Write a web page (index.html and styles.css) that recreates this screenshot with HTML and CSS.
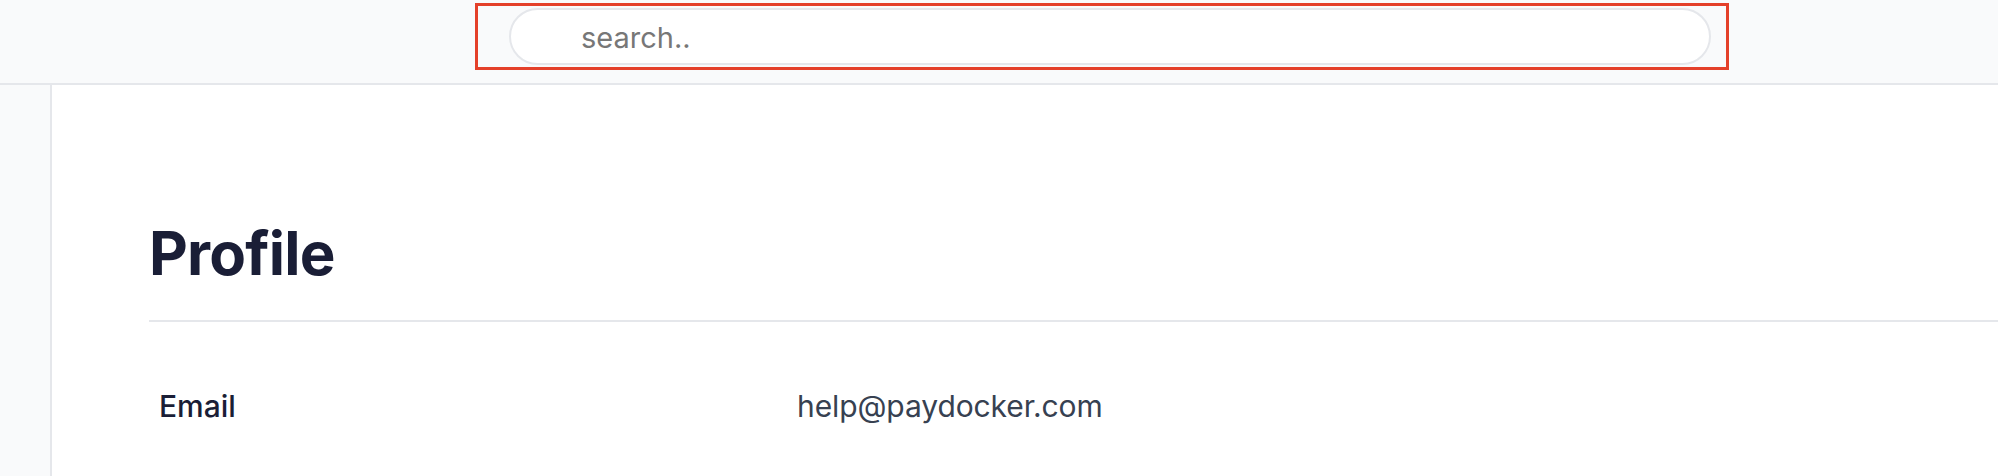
FILE: index.html
```html
<!DOCTYPE html>
<html>
<head>
<meta charset="utf-8">
<link rel="stylesheet" href="styles.css">
</head>
<body>
<header class="topbar">
  <div class="search-frame">
    <input class="search-input" type="text" placeholder="search..">
  </div>
</header>
<div class="layout">
  <aside class="sidebar"></aside>
  <main class="content">
    <h1 class="title">Profile</h1>
    <div class="divider"></div>
    <dl class="fields">
      <dt class="label">Email</dt>
      <dd class="value">help@paydocker.com</dd>
    </dl>
  </main>
</div>
</body>
</html>
```
FILE: styles.css
```css
html, body {
  margin: 0;
  padding: 0;
  height: 100%;
  overflow: hidden;
}
body {
  font-family: Inter, "Liberation Sans", sans-serif;
  background: #ffffff;
  color: #1a1e36;
}
.topbar {
  height: 83px;
  background: #f9fafb;
  border-bottom: 2px solid #e5e7eb;
  box-sizing: content-box;
  display: flex;
  align-items: flex-start;
  padding-left: 475px;
}
.search-frame {
  margin-top: 3px;
  width: 1254px;
  height: 67px;
  box-sizing: border-box;
  border: 3px solid #e4402a;
  padding: 2px 15px 0 31px;
}
.search-input {
  display: block;
  width: 100%;
  height: 57px;
  box-sizing: border-box;
  border: 2px solid #e5e7eb;
  border-radius: 29px;
  background: #ffffff;
  padding: 2px 0 0 70px;
  font-family: Inter, "Liberation Sans", sans-serif;
  font-size: 29px;
  font-weight: 400;
  color: #374151;
  outline: none;
}
.search-input::placeholder {
  color: #777777;
}
.layout {
  display: flex;
  height: calc(100% - 85px);
}
.sidebar {
  width: 50px;
  flex: none;
  background: #f9fafb;
  border-right: 2px solid #e5e7eb;
}
.content {
  flex: 1;
  padding: 138px 0 0 97px;
}
.title {
  margin: 0;
  font-size: 60px;
  line-height: 60px;
  font-weight: 700;
  color: #1a1e36;
  letter-spacing: -0.8px;
}
.divider {
  margin-top: 37px;
  height: 2px;
  background: #e5e7eb;
}
.fields {
  margin: 0;
  padding: 62px 0 0 10px;
  display: grid;
  grid-template-columns: 638px 1fr;
  font-size: 30px;
  line-height: 45px;
}
.label {
  margin: 0;
  font-weight: 500;
  color: #1a1e36;
}
.value {
  margin: 0;
  font-weight: 400;
  color: #374151;
  letter-spacing: -0.1px;
}
```
